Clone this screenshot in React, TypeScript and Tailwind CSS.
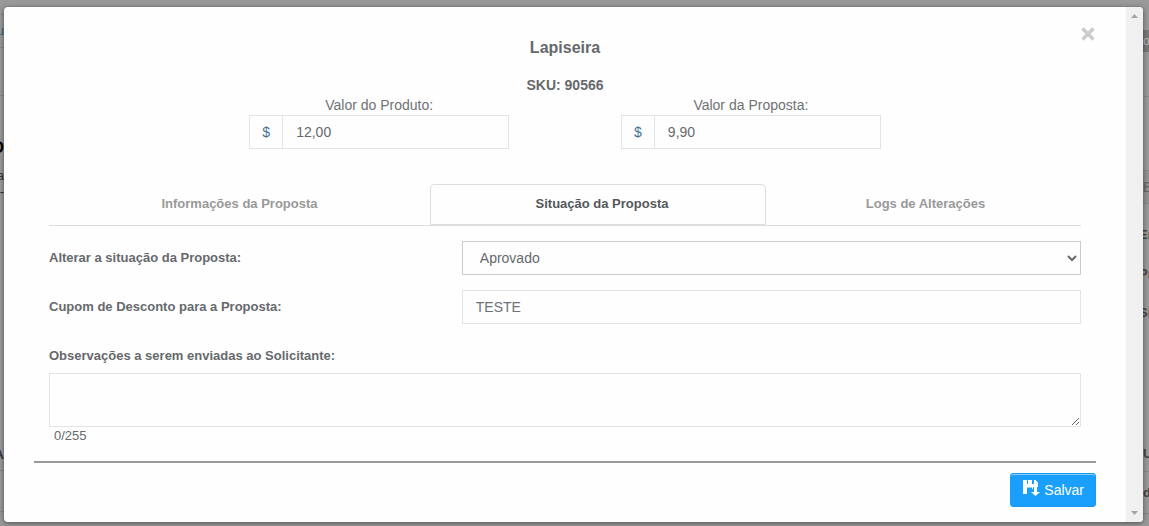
import React, { useState } from 'react';

interface PriceFieldProps {
  id: string;
  label: string;
  value: string;
  onChange: (value: string) => void;
}

const PriceField: React.FC<PriceFieldProps> = ({ id, label, value, onChange }) => (
  <div className="flex flex-1 flex-col items-center">
    <label htmlFor={id} className="text-sm text-[#6f7275]">{label}</label>
    <div className="flex h-[34px] w-[260px] border border-[#e2e5e7]">
      <span className="flex w-[33px] items-center justify-center border-r border-[#e2e5e7] text-sm text-[#3f7398]">$</span>
      <input
        id={id}
        value={value}
        onChange={(e) => onChange(e.target.value)}
        className="min-w-0 flex-1 px-[13px] text-sm text-[#66696c] outline-none"
      />
    </div>
  </div>
);

const tabs = [
  { label: 'Informações da Proposta', width: 'flex-1' },
  { label: 'Situação da Proposta', width: 'w-[336px] pl-2' },
  { label: 'Logs de Alterações', width: 'w-[315px] pl-1' },
];

const SaveIcon = () => (
  <svg width="17" height="17" viewBox="0 0 17 17" fill="currentColor" aria-hidden="true">
    <path d="M0 0h4v4h1V0h4v4h2V0h1.500L15 2.500V7H10v2H9V7.500H4V14H0z" />
    <path d="M11 7h3v5h3l-4.500 4L8 12h3z" />
  </svg>
);

const ScrollRail = () => (
  <div className="flex w-[17px] shrink-0 flex-col items-center justify-between bg-[#f0f0f0] py-[7px]" aria-hidden="true">
    <svg width="7" height="4" viewBox="0 0 7 4"><path d="M0 4L3.500 0L7 4z" fill="#a3a3a3" /></svg>
    <svg width="7" height="4" viewBox="0 0 7 4"><path d="M0 0L3.500 4L7 0z" fill="#a3a3a3" /></svg>
  </div>
);

const App: React.FC = () => {
  const [product, setProduct] = useState('12,00');
  const [proposal, setProposal] = useState('9,90');
  const [activeTab, setActiveTab] = useState(1);
  const [status, setStatus] = useState('Aprovado');
  const [coupon, setCoupon] = useState('TESTE');
  const [notes, setNotes] = useState('');

  return (
    <div className="flex h-screen min-h-[518px] bg-[#999] pt-[7px] pb-1 font-['Liberation_Sans',Arial,sans-serif] text-sm text-[#66696c]">
      {/* Page behind the dialog, left edge */}
      <div className="flex w-1 shrink-0 flex-col items-end overflow-hidden whitespace-nowrap text-[#333]" aria-hidden="true">
        <div className="h-[8px] w-full border-b border-[#888]" />
        <div className="flex h-[33px] w-full items-center justify-end border-b border-[#888] text-xs text-[#335b77]">u</div>
        <div className="h-[48px] w-full border-b border-[#888]" />
        <div className="mt-[42px] text-base leading-5 font-bold text-black">O</div>
        <div className="mt-[10px] text-[13px] leading-4">a</div>
        <div className="text-[13px] leading-4">-</div>
        <div className="mt-[245px] text-[13px] leading-5 font-bold">A</div>
        <div className="mt-[5px] h-[42px] w-full shrink-0 border-y border-[#888]" />
      </div>

      <div role="dialog" aria-labelledby="dialog-title" className="z-10 flex min-w-0 flex-1 overflow-hidden rounded-sm bg-[#fefefe] shadow-[0_1px_5px_rgba(0,0,0,0.5)]">
        <div className="flex-1 px-[30px] pt-4">
          <div className="flex h-[22px] justify-end">
            <button type="button" aria-label="Fechar" className="flex h-[22px] w-4 items-center justify-center text-[#ccc]">
              <svg width="14" height="14" viewBox="0 0 14 14" aria-hidden="true">
                <path d="M1.500 1.500L12.500 12.500M12.500 1.500L1.500 12.500" stroke="currentColor" strokeWidth="3.500" />
              </svg>
            </button>
          </div>

          <div className="text-center font-bold">
            <h1 id="dialog-title" className="-mt-[7px] text-base leading-5">Lapiseira</h1>
            <p className="mt-[17px] leading-5">SKU: 90566</p>
          </div>

          <div className="flex px-[15%]">
            <PriceField id="product" label="Valor do Produto:" value={product} onChange={setProduct} />
            <PriceField id="proposal" label="Valor da Proposta:" value={proposal} onChange={setProposal} />
          </div>

          <div className="px-[15px] text-[13px] font-bold">
            <div role="tablist" className="mt-[35px] flex border-b border-[#ddd]">
              {tabs.map((tab, i) => (
                <button
                  key={tab.label}
                  type="button"
                  role="tab"
                  aria-selected={activeTab === i}
                  onClick={() => setActiveTab(i)}
                  className={`h-[41px] ${tab.width} ${
                    activeTab === i
                      ? 'rounded-t border border-[#ddd] text-[#55585b]'
                      : 'text-[#999]'
                  }`}
                >
                  {tab.label}
                </button>
              ))}
            </div>

            <div className="mt-[15px] flex items-center">
              <label htmlFor="status" className="w-2/5">Alterar a situação da Proposta:</label>
              <select
                id="status"
                value={status}
                onChange={(e) => setStatus(e.target.value)}
                className="h-[34px] w-3/5 border border-[#ccc] bg-[#fefefe] px-[13px] text-sm font-normal text-[#66696c]"
              >
                <option>Aprovado</option>
                <option>Pendente</option>
                <option>Recusado</option>
              </select>
            </div>

            <div className="mt-[15px] flex items-center">
              <label htmlFor="coupon" className="w-2/5">Cupom de Desconto para a Proposta:</label>
              <input
                id="coupon"
                value={coupon}
                onChange={(e) => setCoupon(e.target.value)}
                className="h-[34px] w-3/5 border border-[#e2e5e7] px-[13px] text-sm font-normal text-[#6f7275] outline-none"
              />
            </div>

            <label htmlFor="notes" className="mt-[22px] block leading-5">Observações a serem enviadas ao Solicitante:</label>
            <textarea
              id="notes"
              maxLength={255}
              value={notes}
              onChange={(e) => setNotes(e.target.value)}
              className="mt-[7px] block h-[54px] w-full border border-[#e2e5e7] px-3 py-1 text-sm font-normal outline-none"
            />
            <p className="pl-[5px] leading-[18px] font-normal">{notes.length}/255</p>
          </div>

          <div className="mt-4 flex justify-end border-t-2 border-[#999] pt-[10px]">
            <button type="button" className="flex h-[34px] items-center gap-1 rounded-[3px] border border-[#1a9bfc] bg-[#1a9ffc] pr-[11px] pl-3 text-sm text-white shadow-[inset_0_1px_0_#8accff]">
              <span className="pb-1"><SaveIcon /></span>
              Salvar
            </button>
          </div>
        </div>
        <ScrollRail />
      </div>

      {/* Page behind the dialog, right edge */}
      <div className="flex w-[6px] shrink-0 flex-col overflow-hidden text-[13px] leading-5 whitespace-nowrap text-[#444]" aria-hidden="true">
        <div className="mt-[23px] flex h-[22px] items-center bg-[#777] text-xs text-[#bbb]">o</div>
        <div className="h-[45px] border-b border-[#888]" />
        <div className="mt-[73px] flex h-[34px] items-center border-y border-[#888] bg-[#919191] text-sm text-[#666]">E</div>
        <div className="mt-[21px] -indent-1 font-bold">En</div>
        <div className="mt-[19px] -indent-1 font-bold">Pr</div>
        <div className="mt-[19px] -indent-1 font-bold">Si</div>
        <div className="mt-[121px] font-bold">U</div>
        <div className="mt-[7px] flex h-[43px] shrink-0 items-center border-y border-[#888] font-bold">d</div>
      </div>
    </div>
  );
};

export default App;
